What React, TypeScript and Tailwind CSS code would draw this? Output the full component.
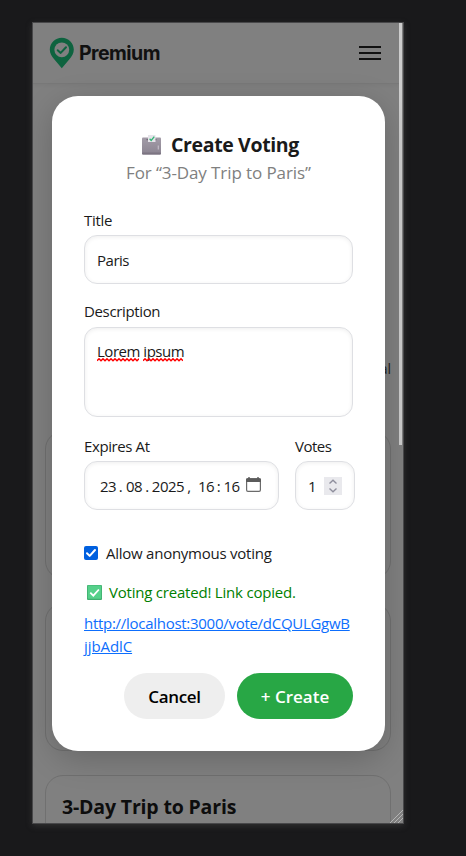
import type { ReactNode } from "react";

function PinLogo() {
  return (
    <svg width="25" height="32" viewBox="0 0 25 32" className="shrink-0">
      <path d="M12.800 .7C6.200 .7 .8 6 .8 12.600c0 3.600 1.900 6.900 4.400 9.700l7.600 8.900 7.600-8.900c2.500-2.800 4.400-6.100 4.400-9.700C24.800 6 19.400 .7 12.800 .7Z" fill="#0e633f" />
      <circle cx="12.800" cy="12.800" r="7.400" fill="#808080" />
      <path d="M8.700 13.200l3 2.700 5.300-5.700" fill="none" stroke="#0e633f" strokeWidth="2" strokeLinecap="round" strokeLinejoin="round" />
    </svg>
  );
}

function BallotBox() {
  return (
    <svg width="19" height="20" viewBox="0 0 19 20" className="shrink-0">
      <defs>
        <linearGradient id="box" x1="0" y1="0" x2="0" y2="1">
          <stop offset="0" stopColor="#a39ca8" />
          <stop offset="1" stopColor="#8b8491" />
        </linearGradient>
      </defs>
      <rect x="0" y="2.500" width="19" height="17" rx="1" fill="url(#box)" />
      <rect x="0" y="17.500" width="19" height="2" rx="1" fill="#7c7582" />
      <path d="M4.500 4h10v1.200h-10z" fill="#6f6876" />
      <path d="M6 0h7.500v7H6z" fill="#e6e4ea" />
      <path d="M7.600 3.800l1.600 1.700L12.300 1.600" fill="none" stroke="#2fb573" strokeWidth="1.300" />
      <path d="M16.300 10.500v4" stroke="#c3bdc8" strokeWidth="1.200" />
    </svg>
  );
}

function CheckEmoji() {
  return (
    <svg width="15" height="15" viewBox="0 0 15 15" className="shrink-0">
      <rect width="15" height="15" rx="1" fill="#3fae6f" />
      <rect x=".8" y=".5" width="13.400" height="13.300" rx=".8" fill="#55d08a" />
      <path d="M3.300 7.700l3 3 5.600-6.200" fill="none" stroke="#fff" strokeWidth="1.800" />
    </svg>
  );
}

function CalendarIcon() {
  return (
    <svg width="15" height="15" viewBox="0 0 15 15" className="shrink-0 -translate-y-px">
      <rect x=".6" y="1.900" width="13.800" height="12.500" rx="1.300" fill="#fff" stroke="#6b6b6b" strokeWidth="1.200" />
      <path d="M0 2.500C0 1.700.7 1.200 1.500 1.200h12c.8 0 1.500.5 1.500 1.300V5H0Z" fill="#5b5b5b" />
      <path d="M3 0v3M12 0v3" stroke="#5b5b5b" strokeWidth="1.400" />
    </svg>
  );
}

function Spinner() {
  return (
    <svg width="18" height="18" viewBox="0 0 18 18" className="shrink-0 bg-[#e9e9ed]">
      <path d="M5.500 6.500L9 3.300l3.500 3.200M5.500 11.500L9 14.700l3.500-3.200" fill="none" stroke="#8f8f9d" strokeWidth="1.400" />
    </svg>
  );
}

function Misspelled({ width, children }: { width: number; children: string }) {
  const steps = Math.floor(width / 2);
  let d = "M0 2.700";
  for (let i = 1; i <= steps; i++) d += `L${i * 2} ${i % 2 ? 0.8 : 2.7}`;
  return (
    <span className="relative inline-block">
      {children}
      <svg width={width} height="4" className="absolute left-0 top-[17px]">
        <path d={d} fill="none" stroke="#f00" strokeWidth="1.500" />
      </svg>
    </span>
  );
}

const field =
  "rounded-[13px] border border-[#dedfe3] bg-white px-3 text-[15px] leading-5 tracking-[-0.480px] shadow-[inset_0_1px_4px_rgba(0,0,0,0.07)]";

function Label({ children, className }: { children: ReactNode; className: string }) {
  return <div className={`whitespace-nowrap text-[15px] leading-5 ${className}`}>{children}</div>;
}

function VotingDialog() {
  return (
    <div className="flex h-[655px] w-[333px] flex-col rounded-[26px] bg-white px-8 pt-[35px] pb-8 text-[#1a1a1a] shadow-[0_8px_32px_rgba(0,0,0,0.2)]">
      <h2 className="flex h-7 items-center pl-[58px] text-[19.500px] leading-7 font-bold tracking-[-0.360px] whitespace-nowrap">
        <BallotBox />
        <span className="ml-[10px]">Create Voting</span>
      </h2>
      <p className="mt-[2px] pl-[42px] text-[17px] leading-6 tracking-[-0.100px] whitespace-nowrap text-[#808080]">For “3-Day Trip to Paris”</p>

      <Label className="mt-[25px] tracking-[-0.300px]">Title</Label>
      <div className={`mt-[5px] flex h-[49px] items-center ${field}`}>Paris</div>

      <Label className="mt-[17px] tracking-[-0.360px]">Description</Label>
      <div className={`mt-[6px] h-[90px] pt-[13px] ${field}`}>
        <Misspelled width={42}>Lorem</Misspelled> <Misspelled width={40}>ipsum</Misspelled>
      </div>

      <div className="mt-[19px] flex gap-4">
        <div className="w-[195px] shrink-0">
          <Label className="tracking-[-0.400px]">Expires At</Label>
          <div className={`mt-[5px] flex h-[49px] items-center text-center ${field}`}>
            <span className="ml-0.5 w-[18px]">23</span>
            <span className="w-[7px]">.</span>
            <span className="w-5">08</span>
            <span className="w-[6px]">.</span>
            <span className="w-9">2025</span>
            <span className="w-[6px]">,</span>
            <span className="ml-[5px] w-[18px]">16</span>
            <span className="w-[7px]">:</span>
            <span className="mr-[5px] w-[19px]">16</span>
            <CalendarIcon />
          </div>
        </div>
        <div className="w-[60px] shrink-0">
          <Label className="tracking-[-0.480px]">Votes</Label>
          <div className={`mt-[5px] flex h-[49px] items-center justify-between ${field}`}>
            <span>1</span>
            <Spinner />
          </div>
        </div>
      </div>

      <div className="mt-[33px] flex h-5 items-center gap-2">
        <svg width="14" height="14" viewBox="0 0 14 14" className="shrink-0 rounded-[2px] bg-[#0060df]">
          <path d="M3 7.200l2.700 2.700L11 4" fill="none" stroke="#fff" strokeWidth="2" strokeLinecap="round" strokeLinejoin="round" />
        </svg>
        <Label className="tracking-[-0.250px]">Allow anonymous voting</Label>
      </div>

      <div className="mt-[19px] flex h-5 items-center gap-[7px] pl-[3px] text-[#008000]">
        <CheckEmoji />
        <Label className="tracking-[-0.210px]">Voting created! Link copied.</Label>
      </div>

      <a className="mt-[10px] text-[15px] leading-[23px] tracking-[-0.280px] whitespace-nowrap text-[#0d6efd] underline">
        http://localhost:3000/vote/dCQULGgwB
        <br />
        <span className="tracking-[-0.080px]">jjbAdlC</span>
      </a>

      <div className="mt-[15px] flex shrink-0 justify-end gap-3 text-[17px] font-semibold whitespace-nowrap">
        <button className="h-[46px] w-[101px] rounded-full bg-[#eee] pt-0.5 tracking-[-0.300px] text-black">Cancel</button>
        <button className="h-[46px] w-[116px] rounded-full bg-[#28a745] pt-0.5 text-white">+ Create</button>
      </div>
    </div>
  );
}

function TripCard({ title }: { title?: string }) {
  return (
    <div className="h-[148px] shrink-0 rounded-[18px] border border-[#707070] px-4 pt-[17px]">
      {title && <h3 className="text-[19.500px] leading-7 font-bold tracking-[-0.170px] whitespace-nowrap text-[#0d0d0d]">{title}</h3>}
    </div>
  );
}

export default function App() {
  return (
    <div className="h-[856px] w-[466px] overflow-hidden bg-[#19191b] pt-[22px] pl-8 font-['Open_Sans',sans-serif]">
      <div className="relative h-[802px] w-[372px] border border-[#48484a] bg-[#808080] shadow-[0_2px_6px_rgba(90,90,90,0.350)]">
        <div className="flex h-[800px] overflow-hidden">
          <div className="flex w-[366px] shrink-0 flex-col">
            <header className="flex h-[61px] shrink-0 items-center justify-between border-b border-[#787878] pr-[18px] pl-4 shadow-[0_1px_4px_rgba(0,0,0,0.060)]">
              <div className="flex items-center gap-[5px]">
                <PinLogo />
                <span className="font-['Inter',sans-serif] text-[19.500px] leading-6 font-bold tracking-[-0.540px] text-[#111]">Premium</span>
              </div>
              <div className="flex flex-col gap-1">
                <span className="h-0.5 w-[22px] bg-[#111]" />
                <span className="h-0.5 w-[22px] bg-[#111]" />
                <span className="h-0.5 w-[22px] bg-[#111]" />
              </div>
            </header>
            <div className="flex h-[347px] shrink-0 items-end justify-end pr-2 pb-[52px] text-[14px] leading-5 text-[#222]">al</div>
            <div className="flex flex-col gap-6 pr-2 pl-3">
              <TripCard />
              <TripCard />
              <TripCard title="3-Day Trip to Paris" />
            </div>
          </div>
          <div className="h-[422px] w-[3px] shrink-0 bg-[#cdcdcd]" />
        </div>
        <div className="absolute inset-0 overflow-hidden">
          <div className="flex pt-[73px] pl-[19px]">
            <VotingDialog />
          </div>
        </div>
        <svg width="13" height="13" viewBox="0 0 13 13" className="absolute right-0 bottom-0">
          <path d="M0 13L13 0M4 13L13 4M8 13L13 8" stroke="#b5b5b5" strokeWidth="1" />
        </svg>
      </div>
    </div>
  );
}
